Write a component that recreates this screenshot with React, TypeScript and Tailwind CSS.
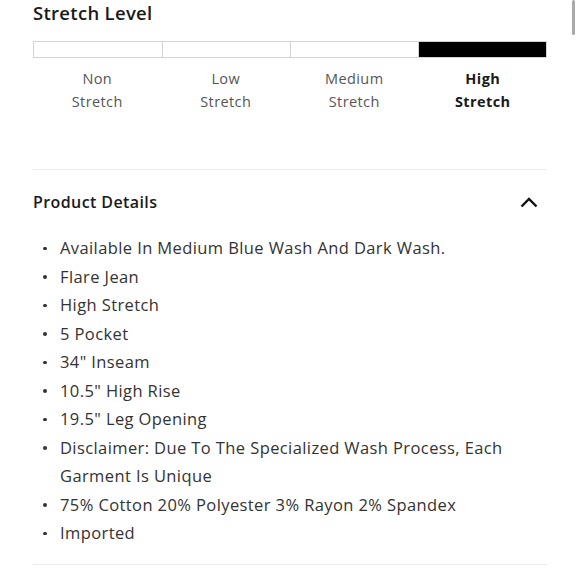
import React from 'react';

const levels = [
  { top: 'Non', bottom: 'Stretch', active: false },
  { top: 'Low', bottom: 'Stretch', active: false },
  { top: 'Medium', bottom: 'Stretch', active: false },
  { top: 'High', bottom: 'Stretch', active: true },
];

const details = [
  'Available In Medium Blue Wash And Dark Wash.',
  'Flare Jean',
  'High Stretch',
  '5 Pocket',
  '34" Inseam',
  '10.5" High Rise',
  '19.5" Leg Opening',
  'Disclaimer: Due To The Specialized Wash Process, Each Garment Is Unique',
  '75% Cotton 20% Polyester 3% Rayon 2% Spandex',
  'Imported',
];

export default function App() {
  return (
    <div
      className="relative h-[580px] w-[580px] overflow-hidden bg-white text-[#222]"
      style={{ fontFamily: '"Open Sans", "Noto Sans", sans-serif' }}
    >
      <div className="absolute right-[5px] top-0 h-[35px] w-[3px] rounded-full bg-[#a8a8a8]" />

      <div className="px-[33px]">
        <h2 className="pt-[1px] text-[18.5px] font-semibold leading-[24px] tracking-[0.3px] text-[#1a1a1a]">
          Stretch Level
        </h2>

        <div className="mt-[16px] grid grid-cols-4 border border-[#d4d4d4]">
          {levels.map((l, i) => (
            <div
              key={i}
              className={`h-[15px] ${l.active ? 'bg-black' : 'bg-white'} ${i > 0 ? 'border-l border-[#d4d4d4]' : ''}`}
            />
          ))}
        </div>

        <div className="mt-[9px] grid grid-cols-4 text-center text-[14.5px] leading-[23px] tracking-[0.4px]">
          {levels.map((l, i) => (
            <div key={i} className={l.active ? 'font-bold text-[#1a1a1a]' : 'text-[#555]'}>
              <div>{l.top}</div>
              <div>{l.bottom}</div>
            </div>
          ))}
        </div>

        <div className="mt-[56px] border-t border-[#ececec]" />

        <div className="flex items-center justify-between pt-[20px]">
          <h3 className="text-[16px] font-semibold leading-[24px] tracking-[0.4px] text-[#1a1a1a]">
            Product Details
          </h3>
          <svg width="18" height="11" viewBox="0 0 18 11" className="mr-[9px]" fill="none">
            <path d="M1.5 9.5L9 2l7.5 7.5" stroke="#111" strokeWidth="2.4" />
          </svg>
        </div>

        <ul className="mt-[20px] pr-[20px] text-[16.5px] leading-[28.5px] tracking-[0.4px] text-[#333]">
          {details.map((d, i) => (
            <li key={i} className="flex">
              <span className="flex h-[28.5px] w-[27px] shrink-0 items-center pl-[10px]">
                <span className="h-[3.5px] w-[3.5px] rounded-full bg-[#333]" />
              </span>
              <span>{d}</span>
            </li>
          ))}
        </ul>

        <div className="mt-[16px] border-t border-[#ececec]" />
      </div>
    </div>
  );
}
